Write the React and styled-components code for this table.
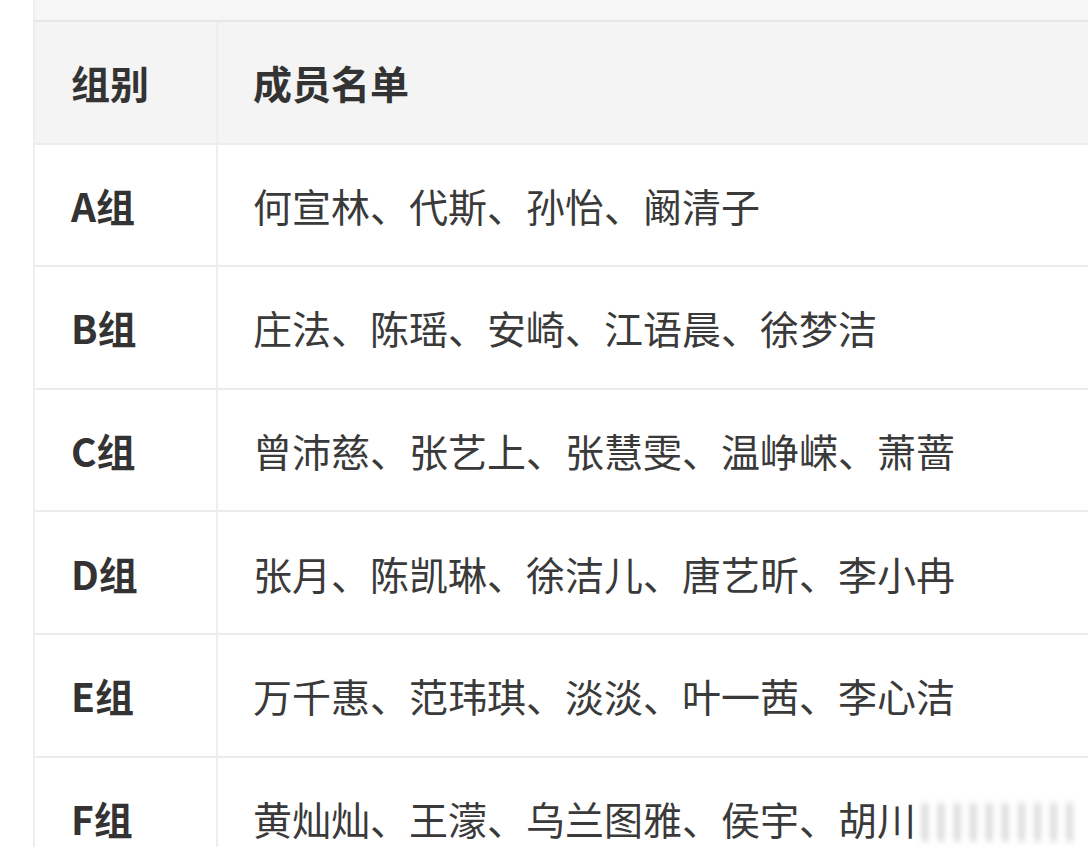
import React from "react";
import styled, { createGlobalStyle } from "styled-components";

const Global = createGlobalStyle`
  html, body {
    margin: 0;
    padding: 0;
    background: #ffffff;
    overflow: hidden;
  }
  body {
    font-family: "Noto Sans CJK SC", "Noto Sans", sans-serif;
    color: #333333;
  }
`;

const Page = styled.div`
  width: 1088px;
  height: 847px;
  padding-left: 33px;
  box-sizing: border-box;
  overflow: hidden;
`;

const TopStrip = styled.div`
  height: 20px;
  background: #f6f6f6;
  border-bottom: 2px solid #e6e6e6;
  border-left: 2px solid #eeeeee;
`;

const Table = styled.div`
  display: grid;
  grid-template-columns: 183px 1fr;
  border-left: 2px solid #eeeeee;
`;

const Cell = styled.div`
  height: 122.6px;
  box-sizing: border-box;
  display: flex;
  align-items: center;
  background: ${(p) => (p.$head ? "#f4f4f4" : "#ffffff")};
  border-bottom: 2px solid #ececec;
  font-size: 39px;
  white-space: nowrap;
`;

const GroupCell = styled(Cell)`
  padding-left: 36px;
  border-right: 2px solid #eeeeee;
  font-weight: 700;
  color: #333333;
`;

const NameCell = styled(Cell)`
  padding-left: 35px;
  font-weight: ${(p) => (p.$head ? 700 : 400)};
  color: ${(p) => (p.$head ? "#333333" : "#3a3a3a")};
`;

const Blur = styled.span`
  display: inline-block;
  filter: blur(3px);
  color: #b8b8b8;
  letter-spacing: 6px;
  font-weight: 700;
  font-size: 34px;
  margin-left: 4px;
`;

const rows = [
  ["A组", "何宣林、代斯、孙怡、阚清子"],
  ["B组", "庄法、陈瑶、安崎、江语晨、徐梦洁"],
  ["C组", "曾沛慈、张艺上、张慧雯、温峥嵘、萧蔷"],
  ["D组", "张月、陈凯琳、徐洁儿、唐艺昕、李小冉"],
  ["E组", "万千惠、范玮琪、淡淡、叶一茜、李心洁"],
];

export default function App() {
  return (
    <Page>
      <Global />
      <TopStrip />
      <Table>
        <GroupCell $head>组别</GroupCell>
        <NameCell $head>成员名单</NameCell>
        {rows.map(([g, n]) => (
          <React.Fragment key={g}>
            <GroupCell>{g}</GroupCell>
            <NameCell>{n}</NameCell>
          </React.Fragment>
        ))}
        <GroupCell>F组</GroupCell>
        <NameCell>
          黄灿灿、王濛、乌兰图雅、侯宇、胡川
          <Blur>||||||||||</Blur>
        </NameCell>
      </Table>
    </Page>
  );
}
